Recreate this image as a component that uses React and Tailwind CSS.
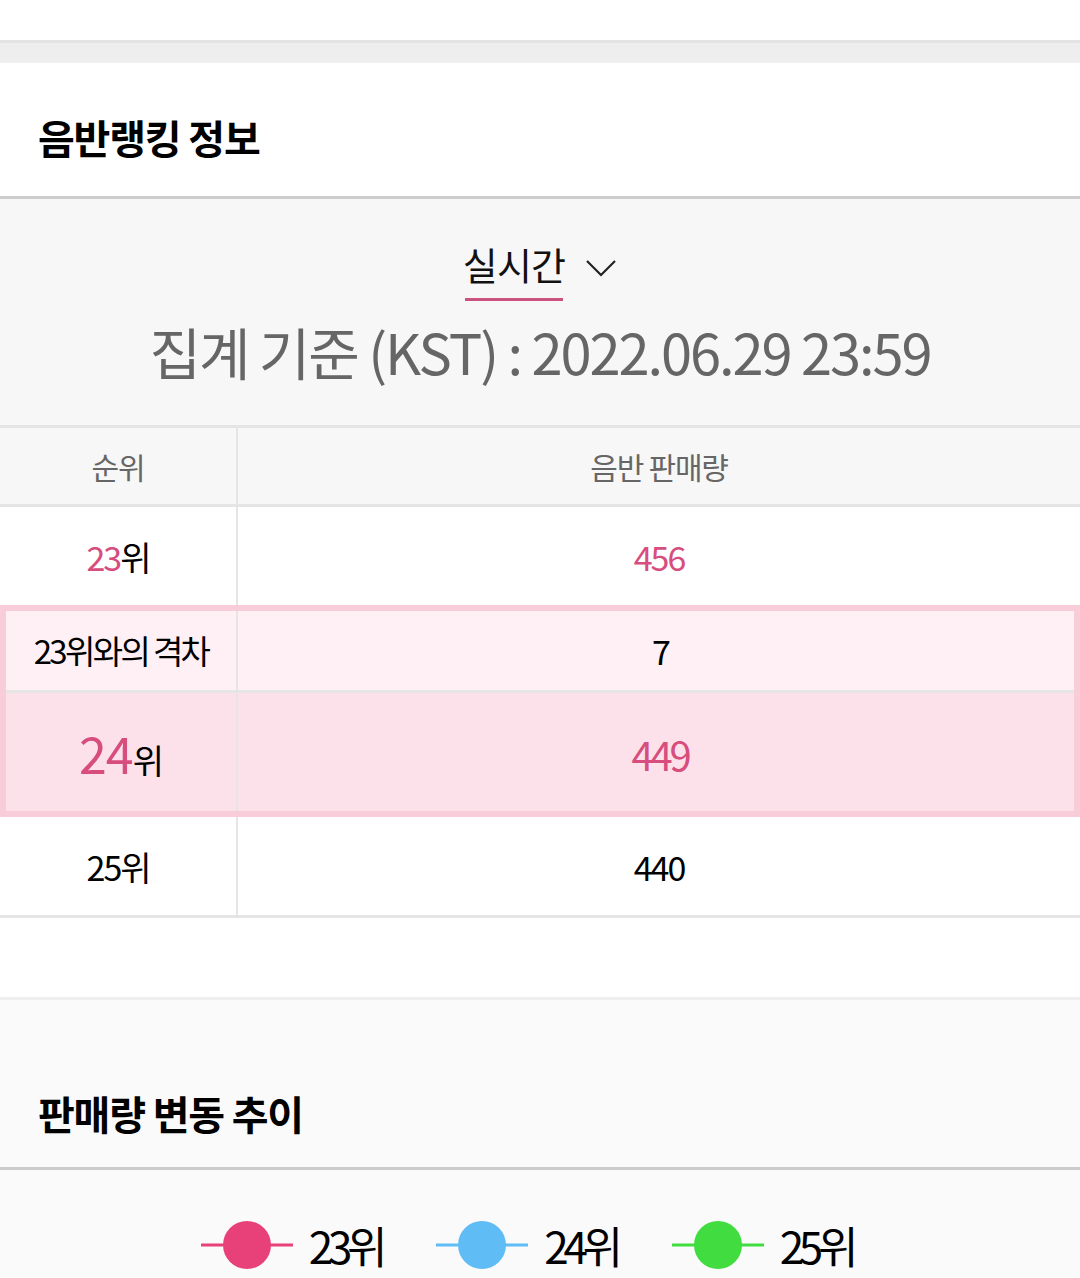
const font = { fontFamily: '"Noto Sans CJK KR", "Noto Sans", sans-serif' };

function Chevron() {
  return (
    <svg width="32" height="20" viewBox="0 0 32 20" fill="none" className="ml-5 -mt-1">
      <path d="M2 3 L16 17 L30 3" stroke="#222" strokeWidth="2.2" />
    </svg>
  );
}

function Legend({ color, label }) {
  return (
    <div className="flex items-center gap-4 h-[50px]">
      <svg width="92" height="50" viewBox="0 0 92 50">
        <line x1="0" y1="25" x2="92" y2="25" stroke={color} strokeWidth="3" />
        <circle cx="46" cy="25" r="24" fill={color} />
      </svg>
      <span className="text-[44px] leading-none tracking-[-0.12em] text-black">{label}</span>
    </div>
  );
}

export default function App() {
  return (
    <div className="w-[1080px] h-[1278px] overflow-hidden bg-white" style={font}>
      <div className="h-10 bg-white" />
      <div className="h-[23px] bg-[#eeeeee] border-t-[3px] border-[#e3e3e3]" />

      <div className="h-[133px] flex items-center px-[38px] pt-[14px]">
        <h2 className="text-[40px] font-bold text-black tracking-[-0.03em]">음반랭킹 정보</h2>
      </div>

      <div className="bg-[#f7f7f7] border-t-[3px] border-[#cccccc] h-[229px] flex flex-col items-center">
        <div className="flex items-center mt-[40px]">
          <div className="flex flex-col items-center">
            <span className="text-[38px] leading-[50px] text-[#111] tracking-[-0.02em]">실시간</span>
            <div className="h-[3px] w-[98px] bg-[#c9527f] mt-[9px]" />
          </div>
          <Chevron />
        </div>
        <div className="text-[56px] leading-none text-[#666666] tracking-[-0.037em] mt-[22px]">
          집계 기준 (KST) : 2022.06.29 23:59
        </div>
      </div>

      <div className="border-t-[3px] border-[#e5e5e5]">
        <div className="flex h-[76px] bg-[#f7f7f7] text-[30px] text-[#666666] tracking-[-0.04em]">
          <div className="w-[238px] flex items-center justify-center border-r-2 border-[#e5e5e5]">순위</div>
          <div className="flex-1 flex items-center justify-center">음반 판매량</div>
        </div>

        <div className="flex h-[101px] bg-white border-t-[3px] border-[#e5e5e5] text-[34px] tracking-[-0.06em]">
          <div className="w-[238px] flex items-center justify-center border-r-2 border-[#e5e5e5]">
            <span className="text-[#d64d7e]">23</span>
            <span className="text-black">위</span>
          </div>
          <div className="flex-1 flex items-center justify-center text-[#d64d7e]">456</div>
        </div>

        <div className="border-[6px] border-[#f9ccd9]">
          <div className="flex h-[79px] bg-[#fef0f4] text-[33px] tracking-[-0.08em] text-black">
            <div className="w-[232px] flex items-center justify-center border-r-2 border-[#e5e5e5]">23위와의 격차</div>
            <div className="flex-1 flex items-center justify-center pl-2 text-[34px]">7</div>
          </div>
          <div className="flex h-[121px] bg-[#fde1ea] border-t-[3px] border-[#e5e5e5]">
            <div className="w-[232px] flex items-end justify-center pb-[34px] border-r-2 border-[#e5e5e5] tracking-[-0.06em]">
              <span className="text-[50px] leading-none text-[#d64d7e]">24</span>
              <span className="text-[34px] leading-none text-black">위</span>
            </div>
            <div className="flex-1 flex items-center justify-center pl-2 text-[40px] tracking-[-0.08em] text-[#d64d7e] pt-1">449</div>
          </div>
        </div>

        <div className="flex h-[101px] bg-white border-b-[3px] border-[#e5e5e5] text-[34px] tracking-[-0.06em] text-black">
          <div className="w-[238px] flex items-center justify-center border-r-2 border-[#e5e5e5]">25위</div>
          <div className="flex-1 flex items-center justify-center">440</div>
        </div>
      </div>

      <div className="h-[79px] bg-white" />

      <div className="bg-[#fafafa] border-t-[3px] border-[#efefef]">
        <div className="h-[167px] flex items-end px-[38px] pb-[24px]">
          <h2 className="text-[40px] font-bold text-black tracking-[-0.03em]">판매량 변동 추이</h2>
        </div>
        <div className="border-t-[3px] border-[#cccccc] h-[120px] flex items-start justify-center gap-[54px] pt-[50px] pr-[26px]">
          <Legend color="#e8417a" label="23위" />
          <Legend color="#5fbcf4" label="24위" />
          <Legend color="#41dc3f" label="25위" />
        </div>
      </div>
    </div>
  );
}
